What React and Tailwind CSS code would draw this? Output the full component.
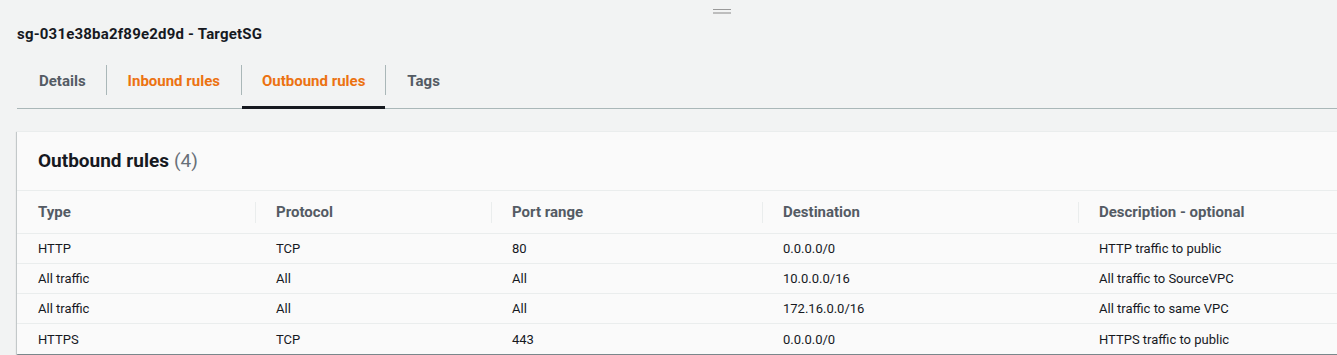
import React from "react";

const cols = [
  { label: "Type", w: "w-[238px]" },
  { label: "Protocol", w: "w-[236px]" },
  { label: "Port range", w: "w-[271px]" },
  { label: "Destination", w: "w-[316px]" },
  { label: "Description - optional", w: "w-[300px]" },
];

const rows = [
  ["HTTP", "TCP", "80", "0.0.0.0/0", "HTTP traffic to public"],
  ["All traffic", "All", "All", "10.0.0.0/16", "All traffic to SourceVPC"],
  ["All traffic", "All", "All", "172.16.0.0/16", "All traffic to same VPC"],
  ["HTTPS", "TCP", "443", "0.0.0.0/0", "HTTPS traffic to public"],
];

export default function App() {
  return (
    <div
      className="w-[1337px] h-[355px] overflow-hidden bg-[#f2f3f3] text-[#16191f]"
      style={{ fontFamily: "Roboto, 'Noto Sans', Arial, sans-serif" }}
    >
      {/* drag handle */}
      <div className="flex flex-col pt-[9px] gap-[2px] pl-[713px]">
        <div className="w-[18px] h-px bg-[#9a9a9a]" />
        <div className="w-[18px] h-[2px] bg-[#bdbdbd]" />
      </div>

      <div className="pl-[17px]">
        <div className="mt-[10px] h-[20px] leading-[20px] text-[15px] tracking-[0.2px] font-bold text-[#16191f]">
          sg-031e38ba2f89e2d9d - TargetSG
        </div>

        {/* tabs */}
        <div className="mt-[6px] flex items-stretch border-b border-[#aab7b8] h-[59px]">
          <div className="flex items-center pl-[22px] pr-[20px] pt-[4px] text-[15px] font-bold text-[#545b64]">
            Details
          </div>
          <div className="w-px h-[30px] self-center mt-[2px] bg-[#aab7b8]" />
          <div className="flex items-center px-[21px] pt-[4px] text-[15px] font-bold text-[#ec7211]">
            Inbound rules
          </div>
          <div className="w-px h-[30px] self-center mt-[2px] bg-[#aab7b8]" />
          <div className="flex items-center px-[20px] pt-[7px] text-[15px] font-bold text-[#ec7211] border-b-[3px] border-[#16191f] -mb-px">
            Outbound rules
          </div>
          <div className="w-px h-[30px] self-center mt-[2px] bg-[#aab7b8]" />
          <div className="flex items-center px-[21px] pt-[4px] text-[15px] font-bold text-[#545b64]">
            Tags
          </div>
        </div>

        {/* panel */}
        <div className="mt-[22px] w-[1400px] bg-[#fafafa] shadow-[0_1px_1px_0_rgba(0,28,36,0.3),1px_1px_1px_0_rgba(0,28,36,0.15),-1px_1px_1px_0_rgba(0,28,36,0.15)] border-t border-[#eaeded]">
          <div className="h-[59px] flex items-center pl-[21px] border-b border-[#eaeded]">
            <span className="text-[19px] font-bold text-[#16191f]">Outbound rules</span>
            <span className="text-[19px] text-[#687078] ml-[5px]">(4)</span>
          </div>

          <div className="flex h-[43px] items-center border-b border-[#eaeded]">
            {cols.map((c, i) => (
              <div key={c.label} className={`${c.w} flex items-center h-[21px] ${i > 0 ? "border-l border-[#eaeded] pl-[20px]" : "pl-[21px]"}`}>
                <span className="text-[15px] font-bold text-[#545b64]">{c.label}</span>
              </div>
            ))}
          </div>

          {rows.map((r, ri) => (
            <div key={ri} className={`flex h-[30px] items-center pt-px ${ri < rows.length - 1 ? "border-b border-[#eaeded]" : ""}`}>
              {r.map((cell, ci) => (
                <div key={ci} className={`${cols[ci].w} pl-[21px] text-[13px] text-[#16191f]`}>
                  {cell}
                </div>
              ))}
            </div>
          ))}
        </div>
      </div>
    </div>
  );
}
